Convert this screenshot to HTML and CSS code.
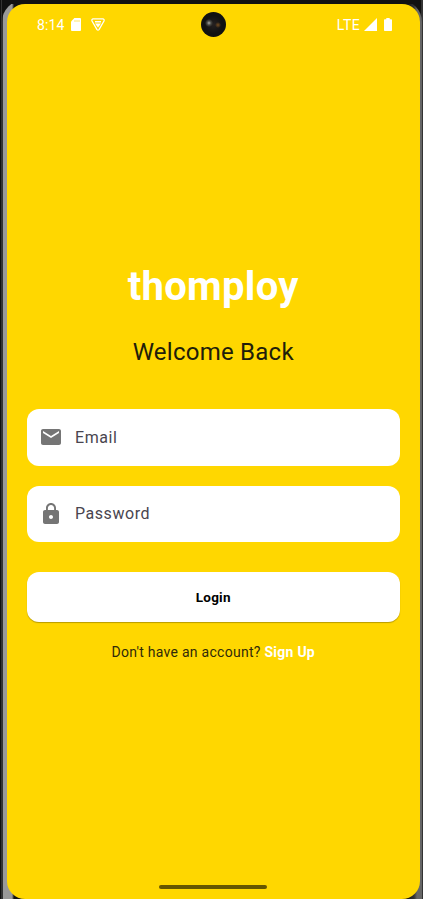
FILE: index.html
```html
<!DOCTYPE html>
<html lang="en">
<head>
<meta charset="utf-8">
<title>thomploy</title>
<link rel="stylesheet" href="styles.css">
</head>
<body>
<div class="device">
  <div class="bezel">
  <div class="screen">
    <header class="status">
      <span class="clock">8:14</span>
      <svg class="sd" width="10" height="13" viewBox="0 0 10 13"><path fill="#fff" d="M3.4 0H9a1 1 0 0 1 1 1v11a1 1 0 0 1-1 1H1a1 1 0 0 1-1-1V3.4z"/><path stroke="#ffe566" d="M4 2v2M6 2v2M8 2v2"/></svg>
      <svg class="vpn" width="14" height="13" viewBox="0 0 14 13" fill="none" stroke="#fff" stroke-linejoin="round"><path stroke-width="1.3" d="M2 .8h10q1.500.4 1 2.200L8 11.600q-1 1.200-2 0L1 3Q.5 1.200 2 .8z"/><path fill="#fff" stroke="none" d="M4 3h6v1.400H4zM4 5.600h6L7 9.600z"/></svg>
      <span class="network">LTE</span>
      <svg class="signal" width="13" height="13" viewBox="0 0 13 13"><path fill="#fff" d="M13 0v13H0z"/></svg>
      <svg class="battery" width="8" height="13" viewBox="0 0 8 13"><path fill="#fff" d="M2.3 0h3.4v1.2H7.2q.8 0 .8.8v10.2q0 .8-.8.8H.8q-.8 0-.8-.8V2q0-.8.8-.8h1.5z"/></svg>
      <i class="camera"></i>
    </header>
    <main>
      <h1><span>thomploy</span></h1>
      <h2><span>Welcome Back</span></h2>
      <div class="field">
        <svg width="24" height="24" viewBox="0 0 24 24"><path fill="#757575" d="M20 4H4c-1.1 0-1.99.9-1.99 2L2 18c0 1.1.9 2 2 2h16c1.1 0 2-.9 2-2V6c0-1.1-.9-2-2-2zm0 4l-8 5-8-5V6l8 5 8-5v2z"/></svg>
        <span class="label">Email</span>
      </div>
      <div class="field">
        <svg width="24" height="24" viewBox="0 0 24 24"><path fill="#757575" d="M18 8h-1V6c0-2.76-2.24-5-5-5S7 3.240 7 6v2H6c-1.100 0-2 .9-2 2v10c0 1.100.9 2 2 2h12c1.100 0 2-.9 2-2V10c0-1.100-.9-2-2-2zm-6 9c-1.100 0-2-.9-2-2s.9-2 2-2 2 .9 2 2-.9 2-2 2zm3.100-9H8.900V6c0-1.710 1.390-3.100 3.100-3.100s3.100 1.390 3.100 3.100v2z"/></svg>
        <span class="label">Password</span>
      </div>
      <button class="login"><span>Login</span></button>
      <p class="signup"><span>Don't have an account?</span> <a>Sign Up</a></p>
    </main>
    <div class="homebar"></div>
  </div>
  </div>
</div>
</body>
</html>
```
FILE: styles.css
```css
* { box-sizing: border-box; }
body { margin: 0; background: #111; font-family: Roboto, sans-serif; overflow: hidden; }
.device {
  height: 899px;
  padding: 0 1px 0 2px;
  background: linear-gradient(90deg, #111 0 1px, #333 1px 2px, #111 2px 421px, #333 421px);
}
.bezel {
  height: 899px;
  padding: 4px 2px 0 5px;
  border-radius: 22px 22px 0 0;
  background: linear-gradient(#111 0 4px, transparent 4px), linear-gradient(90deg, #333 0 1px, #999 1px 10px, #111 12px 405px, #333 412px, #666 415px);
}
.screen {
  height: 895px;
  display: flex;
  flex-direction: column;
  border-radius: 18px;
  background: #ffd700;
}
.status {
  position: relative;
  display: flex;
  align-items: center;
  height: 41px;
  padding: 0 28px 0 30px;
  color: #fff;
  font-size: 14px;
}
.clock { letter-spacing: .15px; }
.sd { margin-left: 6px; }
.vpn { margin-left: 10px; }
.network { margin-left: auto; letter-spacing: .4px; }
.signal { margin-left: 4px; }
.battery { margin-left: 7px; }
.camera {
  position: absolute;
  left: 194px;
  top: 8px;
  width: 25px;
  height: 25px;
  border-radius: 50%;
  background:
    radial-gradient(circle at 8px 11px, #aaa 0, #4a4a45 2px, transparent 4px),
    radial-gradient(circle at 17px 13px, #754c20 0, transparent 3px),
    radial-gradient(circle, #252020, #111 9px);
}
main { flex: 1; padding: 217px 20px 0 19.500px; }
h1, h2, p { margin: 0; text-align: center; white-space: nowrap; }
h1 { height: 50px; line-height: 50px; font-size: 40px; font-weight: 700; letter-spacing: .3px; color: #fff; }
h2 { height: 32px; margin: 24px 0 41px; line-height: 32px; font-size: 24px; font-weight: 400; letter-spacing: .25px; color: #211d0a; }
.field {
  display: flex;
  align-items: center;
  height: 56.500px;
  margin-bottom: 20px;
  padding-left: 12.500px;
  border-radius: 12px;
  background: #fff;
}
.label { margin-left: 12px; font-size: 16px; letter-spacing: .55px; color: #49454f; }
.login {
  display: block;
  width: 100%;
  height: 50px;
  margin-top: 30px;
  padding: 0;
  border: 0;
  border-radius: 12px;
  background: #fff;
  box-shadow: 0 1px 1px rgba(0, 0, 0, .28);
  font: 700 13.500px Roboto, sans-serif;
  letter-spacing: .25px;
  color: #000;
}
.signup { margin-top: 20px; line-height: 20px; font-size: 14px; letter-spacing: .27px; color: #302a0a; }
.signup a { color: #fff; font-weight: 700; }
.homebar { width: 108px; height: 4px; margin: 0 0 10px 152px; border-radius: 2px; background: #665600; }
```
